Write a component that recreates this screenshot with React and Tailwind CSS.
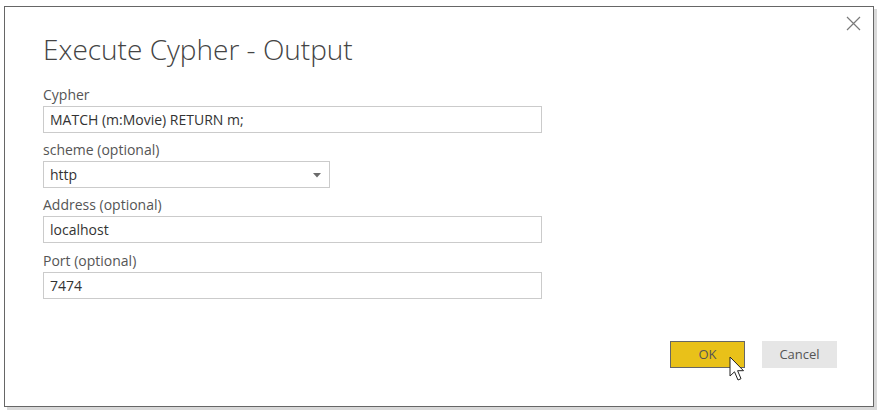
import React from "react";

const font = { fontFamily: '"Open Sans", "Noto Sans", "Liberation Sans", sans-serif' };

function Field({ label, value, className = "w-[499px]", select = false, mt = "mt-[7px]" }) {
  return (
    <div className={`flex flex-col ${mt}`}>
      <div className="h-[20px] text-[14px] leading-[20px] text-[#555]">{label}</div>
      <div
        className={`relative mt-[1px] flex h-[27px] items-center border border-[#cbcbcb] bg-white pl-[6px] text-[14px] text-[#333] ${className}`}
      >
        {value}
        {select && (
          <svg className="absolute right-[8px] top-[11px]" width="8" height="5" viewBox="0 0 8 5">
            <path d="M0 0 H8 L4 4.5 Z" fill="#6b6b6b" />
          </svg>
        )}
      </div>
    </div>
  );
}

export default function App() {
  return (
    <div className="h-[411px] w-[880px] bg-white pl-[4px] pt-[6px]" style={font}>
      <div className="relative flex h-[401px] w-[870px] flex-col border border-[#666] bg-white pl-[38px] shadow-[3px_3px_0_#d9d9d9]">
        <svg className="absolute right-[12px] top-[9px]" width="15" height="15" viewBox="0 0 15 15">
          <path d="M1 1 L14 14 M14 1 L1 14" stroke="#7a7a7a" strokeWidth="1.2" />
        </svg>
        <div className="mt-[24px] h-[36px] text-[28px] font-light leading-[36px] text-[#444]">
          Execute Cypher - Output
        </div>
        <Field label="Cypher" value="MATCH (m:Movie) RETURN m;" mt="mt-[18px]" />
        <Field label="scheme (optional)" value="http" className="w-[287px]" select />
        <Field label="Address (optional)" value="localhost" />
        <Field label="Port (optional)" value="7474" mt="mt-[8px]" />
        <div className="mt-[42px] flex justify-end gap-[17px] pr-[36px]">
          <div className="relative flex h-[27px] w-[75px] items-center justify-center border border-[#666] bg-[#e9c119] text-[13px] text-[#555]">
            OK
            <svg className="absolute left-[58px] top-[14px]" width="19" height="28" viewBox="0 0 19 28">
              <path
                d="M1 1 L1 20 L5.5 15.8 L9 24 L12 22.7 L8.6 14.7 L14.5 14.7 Z"
                fill="#fff"
                stroke="#222"
                strokeWidth="1"
                strokeLinejoin="miter"
              />
            </svg>
          </div>
          <div className="flex h-[27px] w-[75px] items-center justify-center bg-[#e6e6e6] text-[13px] text-[#555]">
            Cancel
          </div>
        </div>
      </div>
    </div>
  );
}
